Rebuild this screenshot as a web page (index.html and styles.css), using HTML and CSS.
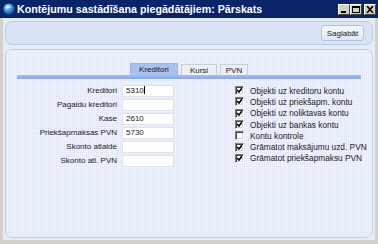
FILE: index.html
```html
<!DOCTYPE html>
<html lang="lv">
<head>
    <meta charset="UTF-8">
    <title>Kontējumu sastādīšana piegādātājiem: Pārskats</title>
    <link rel="stylesheet" href="styles.css">
</head>
<body>
<div class="window">
    <div class="titlebar">
        <svg class="app-icon" width="12" height="12" viewBox="0 0 12 12">
            <defs>
                <radialGradient id="orb" cx="0.35" cy="0.3" r="0.8">
                    <stop offset="0" stop-color="#bfe6ff"/>
                    <stop offset="0.5" stop-color="#3a8fd8"/>
                    <stop offset="1" stop-color="#0b3d8c"/>
                </radialGradient>
            </defs>
            <circle cx="6" cy="6" r="5.5" fill="url(#orb)"/>
            <path d="M3 4.5 Q6 2 9 4.5 Q6 3.5 4 6 Z" fill="#ffffff" opacity="0.85"/>
        </svg>
        <span class="title">Kontējumu sastādīšana piegādātājiem: Pārskats</span>
        <div class="wbtns">
            <span class="wbtn">
                <svg width="8" height="7" viewBox="0 0 8 7"><rect x="1" y="5" width="5" height="2" fill="#000"/></svg>
            </span>
            <span class="wbtn">
                <svg width="8" height="7" viewBox="0 0 8 7"><rect x="0.5" y="0.5" width="7" height="6" fill="none" stroke="#000"/><rect x="0" y="0" width="8" height="2" fill="#000"/></svg>
            </span>
            <span class="wbtn close">
                <svg width="8" height="7" viewBox="0 0 8 7"><path d="M1 0 L7 7 M7 0 L1 7" stroke="#000" stroke-width="1.6"/></svg>
            </span>
        </div>
    </div>

    <div class="client">
        <div class="toolbar">
            <button class="btn">Saglabāt</button>
        </div>

        <div class="panel">
            <div class="tabs">
                <span class="tab active tab-kred">Kreditori</span>
                <span class="tab tab-kursi">Kursi</span>
                <span class="tab tab-pvn">PVN</span>
            </div>
            <div class="tabline"></div>

            <div class="form">
                <div class="fields">
                    <label>Kreditori</label><span class="input">5310<i class="caret"></i></span>
                    <label>Pagaidu kreditori</label><span class="input"></span>
                    <label>Kase</label><span class="input">2610</span>
                    <label>Priekšapmaksas PVN</label><span class="input">5730</span>
                    <label>Skonto atlaide</label><span class="input"></span>
                    <label>Skonto atl. PVN</label><span class="input"></span>
                </div>

                <div class="checks">
                    <div class="check on"><span class="box"></span>Objekti uz kreditoru kontu</div>
                    <div class="check on"><span class="box"></span>Objekti uz priekšapm. kontu</div>
                    <div class="check on"><span class="box"></span>Objekti uz noliktavas kontu</div>
                    <div class="check on"><span class="box"></span>Objekti uz bankas kontu</div>
                    <div class="check"><span class="box"></span>Kontu kontrole</div>
                    <div class="check on"><span class="box"></span>Grāmatot maksājumu uzd. PVN</div>
                    <div class="check on"><span class="box"></span>Grāmatot priekšapmaksu PVN</div>
                </div>
            </div>
        </div>
    </div>
</div>
</body>
</html>
```

FILE: styles.css
```css
body {
    margin: 0;
    font-family: "Liberation Sans", Arial, sans-serif;
    font-size: 8px;
    color: #1a1a1a;
}

.window {
    width: 378px;
    height: 244px;
    background: #d4d0c8;
    display: flex;
    flex-direction: column;
}

/* title bar */
.titlebar {
    height: 18px;
    background: #0a246a;
    display: flex;
    align-items: center;
    padding: 0 2px 0 3px;
    color: #fff;
}

.app-icon {
    margin-right: 2px;
}

.title {
    flex: 1;
    font-weight: bold;
    font-size: 10.7px;
}

.wbtns {
    display: flex;
}

.wbtn {
    width: 12px;
    height: 11px;
    box-sizing: border-box;
    background: #d4d0c8;
    border: 1px solid;
    border-color: #ffffff #404040 #404040 #ffffff;
    display: flex;
    align-items: center;
    justify-content: center;
}

.wbtn.close {
    margin-left: 2px;
}

/* client area */
.client {
    flex: 1;
    margin: 0 3px 4px;
    background: #e6ecf5;
    padding: 3px 2px 2px;
    display: flex;
    flex-direction: column;
    gap: 4px;
}

.toolbar {
    height: 24px;
    box-sizing: border-box;
    border: 1px solid #bccde9;
    border-radius: 7px;
    background: #d8e3f5;
    display: flex;
    justify-content: flex-end;
    align-items: center;
    padding-right: 8px;
}

.btn {
    width: 43px;
    height: 16px;
    padding: 0;
    font: inherit;
    color: #1a1a1a;
    border: 1px solid #b4c2da;
    border-radius: 3px;
    background: linear-gradient(#f6f8fc, #e0e7f3);
}

.panel {
    flex: 1;
    border: 1px solid #bfcfe9;
    border-radius: 7px;
    background-color: #f3f6fc;
    background-image:
        repeating-linear-gradient(0deg, rgba(200, 212, 235, 0.25) 0 1px, transparent 1px 2px),
        repeating-linear-gradient(90deg, rgba(200, 212, 235, 0.25) 0 1px, transparent 1px 2px);
    padding: 13px 11px 0;
}

/* tabs */
.tabs {
    display: flex;
    justify-content: center;
    align-items: flex-end;
    gap: 3px;
    height: 12px;
}

.tab {
    height: 11px;
    line-height: 11px;
    box-sizing: border-box;
    text-align: center;
    background: #eceef2;
    border: 1px solid #c9ced8;
    border-bottom: 0;
}

.tab.active {
    height: 12px;
    line-height: 12px;
    background: #a9c1ef;
    border-color: #9db4e4;
}

.tab-kred { width: 48px; }
.tab-kursi { width: 36px; }
.tab-pvn { width: 28px; }

.tabline {
    height: 4px;
    background: linear-gradient(#a6bff0, #86a6e6);
}

/* form */
.form {
    display: flex;
    margin-top: 6px;
}

.fields {
    display: grid;
    grid-template-columns: 100px 52px;
    grid-auto-rows: 12px;
    column-gap: 5px;
    row-gap: 2px;
}

.fields label {
    text-align: right;
    line-height: 12px;
    white-space: nowrap;
}

.input {
    position: relative;
    box-sizing: border-box;
    background: #ffffff;
    border: 1px solid #dde2ec;
    padding-left: 3px;
    line-height: 10px;
}

.caret {
    display: inline-block;
    width: 1px;
    height: 8px;
    background: #000;
    vertical-align: -1px;
}

.checks {
    margin-left: 61px;
    display: flex;
    flex-direction: column;
    font-size: 8.3px;
}

.check {
    height: 11.3px;
    display: flex;
    align-items: center;
    white-space: nowrap;
}

.box {
    flex: none;
    width: 9px;
    height: 9px;
    box-sizing: border-box;
    margin-right: 6px;
    background: #fff;
    border: 1px solid;
    border-color: #808080 #ffffff #ffffff #808080;
    box-shadow: inset 1px 1px 0 #404040, inset -1px -1px 0 #d4d0c8;
}

.check.on .box {
    background: #fff url("data:image/svg+xml;utf8,<svg xmlns='http://www.w3.org/2000/svg' width='7' height='7' viewBox='0 0 7 7'><path d='M1 3 L3 5 L6 1' fill='none' stroke='black' stroke-width='1.6'/></svg>") center / 7px 7px no-repeat;
}
```
